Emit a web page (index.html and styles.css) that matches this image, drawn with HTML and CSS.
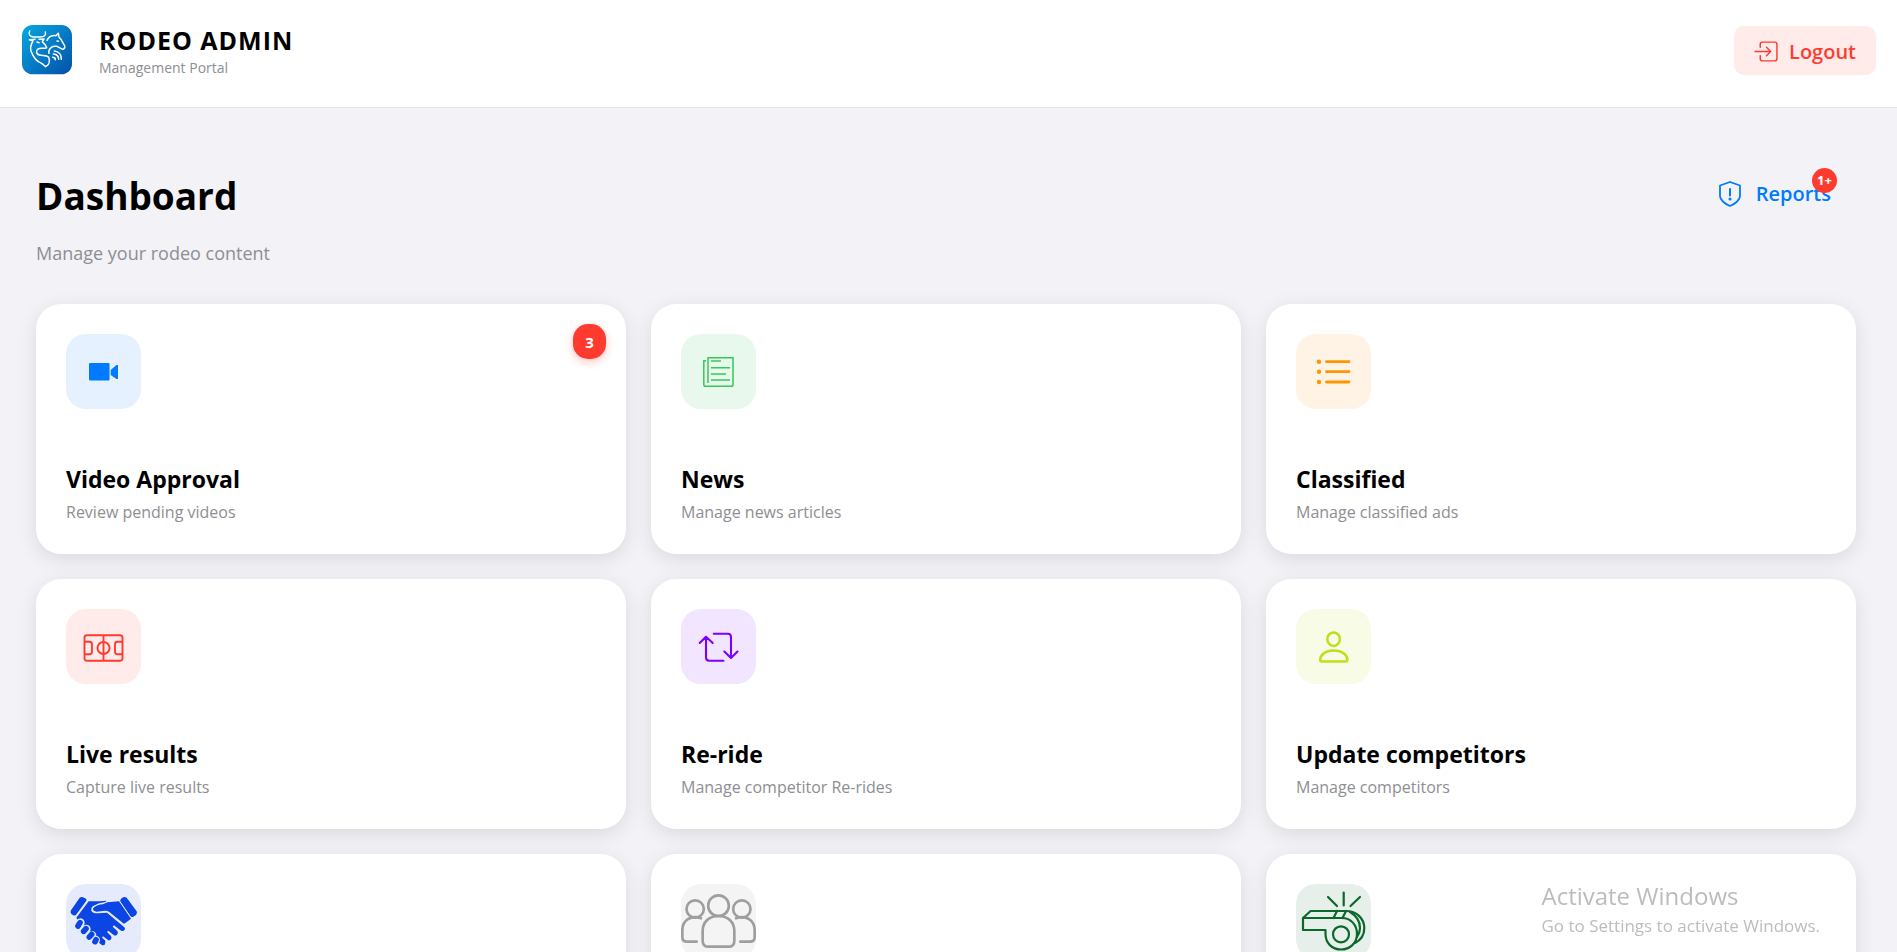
FILE: index.html
```html
<!DOCTYPE html>
<html lang="en">
<head>
<meta charset="utf-8">
<title>Rodeo Admin</title>
<meta name="viewport" content="width=device-width, initial-scale=1">
<link rel="stylesheet" href="styles.css">
</head>
<body>
<div class="app">
  <header class="topbar">
    <div class="brand">
      <svg class="brand-logo" viewBox="66 75 150 150" fill="none" stroke="#fff" stroke-width="4.5" stroke-linecap="round" stroke-linejoin="round" aria-hidden="true">
        <defs>
          <linearGradient id="logo-bg" x1="0" y1="0" x2="1" y2="1">
            <stop offset="0" stop-color="#06a8e2"/>
            <stop offset="1" stop-color="#0450a8"/>
          </linearGradient>
        </defs>
        <rect x="66" y="75" width="150" height="148" rx="32" fill="url(#logo-bg)" stroke="none"/>
        <path d="M89 93C84 103 90 110 100 111H120C133 111 139 106 136 96"/>
        <path d="M105 118L88 119L99 122C94 132 89 141 93 153C99 170 108 184 125 190L137 200C150 194 149 180 146 172C139 163 128 168 118 165C108 162 107 152 114 147C122 142 133 148 140 143L136 135L127 125L132 117L117 118"/>
        <path d="M111 126L117 128"/>
        <path d="M141 121C146 110 158 106 168 107L175 100L177 111C184 118 188 128 194 137C196 145 190 150 184 146L171 139C164 138 158 139 154 142C148 147 145 153 147 160"/>
        <path d="M171 123L175 124"/>
        <path d="M158 172C163 172 166 175 166 179M160 162C170 163 176 170 176 178M163 153C177 155 185 165 184 178"/>
      </svg>
      <div class="brand-text">
        <div class="brand-name">RODEO ADMIN</div>
        <div class="brand-sub">Management Portal</div>
      </div>
    </div>
    <button class="logout" type="button">
      <svg class="logout-icon" viewBox="0 0 24 24" fill="none" stroke="currentColor" stroke-width="1.4" stroke-linecap="round" stroke-linejoin="round" aria-hidden="true">
        <path d="M6 8V5A2 2 0 0 1 8 3H20A2 2 0 0 1 22 5V19A2 2 0 0 1 20 21H8A2 2 0 0 1 6 19V16M1 12H15M12 8L16 12L12 16"/>
      </svg>
      Logout
    </button>
  </header>

  <main class="content">
    <div class="page-head">
      <div>
        <h1 class="page-title">Dashboard</h1>
        <p class="page-sub">Manage your rodeo content</p>
      </div>
      <a class="reports" href="#">
        <svg class="reports-icon" viewBox="0 0 24 28" fill="none" stroke="currentColor" stroke-width="1.8" stroke-linecap="round" stroke-linejoin="round" aria-hidden="true">
          <path d="M12 2L22 5.500V16C22 20 17 24 12 26C7 24 2 20 2 16V5.500Z"/>
          <path d="M12 9V15.500" stroke-width="2"/><circle cx="12" cy="19" r="1.500" fill="currentColor" stroke="none"/>
        </svg>
        Reports
        <span class="reports-count">1+</span>
      </a>
    </div>

    <div class="cards">
      <a class="card" href="#">
        <span class="count">3</span>
        <svg class="tile blue" viewBox="0 0 75 75" fill="currentColor" aria-hidden="true">
          <rect x="23" y="29" width="20.500" height="17.500" rx="1"/>
          <path d="M44.700 36L50.500 31H52V45H50.500L44.700 41Z"/>
        </svg>
        <h2 class="card-title">Video Approval</h2>
        <p class="card-text">Review pending videos</p>
      </a>
      <a class="card" href="#">
        <svg class="tile green" viewBox="0 0 75 75" fill="none" stroke="currentColor" stroke-width="1.500" aria-hidden="true">
          <path d="M27 49V23.700H52V50.500Q52 52.300 50.300 52.300H24.500Q22.800 52.300 22.800 50.500V26.800H25M30 27H40M30 33.800H49M30 40H45M30 46H49"/>
        </svg>
        <h2 class="card-title">News</h2>
        <p class="card-text">Manage news articles</p>
      </a>
      <a class="card" href="#">
        <svg class="tile orange" viewBox="0 0 75 75" fill="none" stroke="currentColor" stroke-width="2.800" stroke-linecap="round" aria-hidden="true">
          <path d="M30.500 27.700H53M30.500 37.700H53M30.500 48H53"/>
          <g fill="currentColor" stroke="none"><circle cx="23" cy="27.700" r="2.200"/><circle cx="23" cy="37.700" r="2.200"/><circle cx="23" cy="48" r="2.200"/></g>
        </svg>
        <h2 class="card-title">Classified</h2>
        <p class="card-text">Manage classified ads</p>
      </a>
      <a class="card" href="#">
        <svg class="tile red" viewBox="0 0 75 75" fill="none" stroke="currentColor" stroke-width="1.900" aria-hidden="true">
          <rect x="18.500" y="26.300" width="38" height="25.500" rx="2.500"/>
          <path d="M37.500 26V52M18.500 32.800H23.500Q26 32.800 26 35.300V42.800Q26 45.300 23.500 45.300H18.500M56.500 32.800H51.500Q49 32.800 49 35.300V42.800Q49 45.300 51.500 45.300H56.500"/>
          <circle cx="37.500" cy="39" r="6"/>
        </svg>
        <h2 class="card-title">Live results</h2>
        <p class="card-text">Capture live results</p>
      </a>
      <a class="card" href="#">
        <svg class="tile purple" viewBox="0 0 75 75" fill="none" stroke="currentColor" stroke-width="2.100" stroke-linecap="round" stroke-linejoin="round" aria-hidden="true">
          <path d="M18.700 34L25 27.700L31.700 34M25 28V48.500Q25 51.700 28.200 51.700H42.500M32.800 24.700H46.800Q50 24.700 50 27.900V49M43.300 42.500L50 49L56.500 42.500"/>
        </svg>
        <h2 class="card-title">Re-ride</h2>
        <p class="card-text">Manage competitor Re-rides</p>
      </a>
      <a class="card" href="#">
        <svg class="tile lime" viewBox="0 0 75 75" fill="none" stroke="currentColor" stroke-width="2.500" stroke-linejoin="round" aria-hidden="true">
          <ellipse cx="37.600" cy="30.200" rx="6.300" ry="6.700"/>
          <path d="M37.700 41.500C29 41.500 24.200 46.500 24.200 50.700Q24.200 52.500 26 52.500H49.500Q51.400 52.500 51.400 50.700C51.400 46.500 46.500 41.500 37.700 41.500Z"/>
        </svg>
        <h2 class="card-title">Update competitors</h2>
        <p class="card-text">Manage competitors</p>
      </a>
      <a class="card" href="#">
        <svg class="tile royal" viewBox="108 132 225 225" fill="currentColor" aria-hidden="true">
          <path d="M149 173Q156 169 162 173L168 176Q172 180 168 184L140 222Q136 228 130 226L124 222Q119 218 123 211Z"/>
          <path d="M276 174Q283 169 290 173L320 214Q323 221 318 225L310 230Q304 233 300 227L272 186Q268 180 276 174Z"/>
          <path d="M176 184H211L229 182L227 186L207 190L188 199Q181 205 184 212Q189 221 204 220L231 218L283 262Q288 268 281 272Q276 275 271 271L252 256L248 260L262 273Q266 279 261 284Q256 289 250 284L235 272L231 276L243 288Q247 294 242 299Q236 304 231 298L219 289L216 293L225 301Q229 308 224 314Q217 318 212 312L190 298L142 238L139 233Z"/>
          <path d="M189 205Q202 193 219 193L232 187L267 184L303 236L285 250Q280 252 276 247L237 215Q231 211 218 213L200 215Q189 215 189 205Z" stroke="#e6ebfc" stroke-width="5" paint-order="stroke"/>
          <g stroke="#e6ebfc" stroke-width="26" stroke-linecap="round">
            <path d="M151 248L144 258M169 267L161 275M186 286L177 292M197 300L194 305"/>
          </g>
          <g stroke="currentColor" stroke-width="17" stroke-linecap="round">
            <path d="M150 248L144 258M168 266L161 274M185 283L178 291M198 299L195 305"/>
          </g>
        </svg>
      </a>
      <a class="card" href="#">
        <svg class="tile gray" viewBox="123 132 225 225" fill="none" stroke="currentColor" stroke-width="8" stroke-linecap="round" stroke-linejoin="round" aria-hidden="true">
          <circle cx="235.500" cy="197" r="31"/><circle cx="165.500" cy="207" r="26"/><circle cx="305.500" cy="207" r="26"/>
          <path d="M235.500 228C206 228 188 247 188 272V302Q188 320 206 320H265Q283 320 283 302V272C283 247 265 228 235.500 228Z"/>
          <path d="M183 235C153 223 127 242 127 270V291Q127 305 141 305H170M288 235C318 223 344 242 344 270V291Q344 305 330 305H301"/>
        </svg>
      </a>
      <a class="card" href="#">
        <svg class="tile forest" viewBox="0 0 75 75" fill="none" stroke="currentColor" stroke-width="2.200" stroke-linecap="round" stroke-linejoin="round" aria-hidden="true">
          <path d="M32 13L41 22M47.700 8.500V21.500M64 13L54.500 22"/>
          <path d="M7 34L14.600 27H50C61 27 68.300 35 68.300 44C68.300 51 65 56 59 59"/>
          <path d="M7 34H46C55 34 61 41 61 50C61 59 54 65.500 45 65.500C36 65.500 29.500 59 29.500 50V46H7Z"/>
          <path d="M41 27L37.500 34M50 27L46.500 34M54 28C61 32 64 38 64 44C64 48 63 50 61 53"/>
          <circle cx="45" cy="50.300" r="8"/>
        </svg>
      </a>
    </div>
  </main>

  <aside class="activation">
    <div class="activation-title">Activate Windows</div>
    <div class="activation-text">Go to Settings to activate Windows.</div>
  </aside>
</div>
</body>
</html>
```
FILE: styles.css
```css
* {
  box-sizing: border-box;
}

body {
  margin: 0;
  background: #f2f2f7;
  color: #000;
  font-family: "Segoe UI", "Open Sans", "Noto Sans", sans-serif;
}

.app {
  height: 100vh;
  overflow: hidden;
}

.topbar {
  display: flex;
  align-items: flex-start;
  justify-content: space-between;
  padding: 25px 21px 27px 22px;
  background: #fff;
  border-bottom: 1px solid #e4e4e9;
}

.brand {
  display: flex;
  gap: 27px;
}

.brand-logo {
  width: 50px;
  height: 50px;
}

.brand-name {
  font-size: 25px;
  font-weight: 700;
  line-height: 31px;
  letter-spacing: 1px;
}

.brand-sub {
  font-size: 14px;
  line-height: 24px;
  color: #8e8e93;
}

.logout {
  display: flex;
  align-items: center;
  gap: 10px;
  height: 49px;
  margin-top: 1px;
  padding: 1px 20px 0;
  border: 0;
  border-radius: 10px;
  background: #ffebea;
  color: #ff3b30;
  font: inherit;
  font-size: 20px;
  font-weight: 600;
  cursor: pointer;
}

.logout-icon {
  width: 25px;
  height: 25px;
}

.content {
  padding: 60px 41px 40px 36px;
}

.page-head {
  display: flex;
  align-items: flex-start;
  justify-content: space-between;
  margin-bottom: 37px;
}

.page-title {
  margin: 0;
  font-size: 37px;
  font-weight: 700;
  line-height: 56px;
}

.page-sub {
  margin: 15px 0 0;
  font-size: 18px;
  line-height: 28px;
  color: #8e8e93;
}

.reports {
  position: relative;
  display: flex;
  align-items: center;
  gap: 14px;
  margin: 11px 25px 0 0;
  color: #007aff;
  font-size: 20px;
  font-weight: 600;
  line-height: 30px;
  text-decoration: none;
}

.reports-icon {
  width: 24px;
  height: 28px;
}

.reports-count {
  position: absolute;
  top: -11px;
  right: -6px;
  width: 25px;
  height: 25px;
  border-radius: 50%;
  background: #ff3b30;
  color: #fff;
  font-size: 13px;
  font-weight: 700;
  line-height: 25px;
  text-align: center;
}

.cards {
  display: grid;
  grid-template-columns: repeat(3, 1fr);
  gap: 25px;
}

.card {
  position: relative;
  display: block;
  min-height: 250px;
  padding: 30px;
  border-radius: 25px;
  background: #fff;
  box-shadow: 0 5px 20px rgba(0, 0, 0, 0.1);
  color: #000;
  text-decoration: none;
}

.card-title {
  margin: 53px 0 0;
  font-size: 23px;
  font-weight: 700;
  line-height: 34px;
}

.card-text {
  margin: 4px 0 0;
  font-size: 16px;
  line-height: 24px;
  color: #8e8e93;
}

.count {
  position: absolute;
  top: 20px;
  right: 20px;
  width: 33px;
  height: 35px;
  border-radius: 15px;
  background: #ff3b30;
  box-shadow: 0 3px 8px rgba(255, 59, 48, 0.3);
  color: #fff;
  font-size: 15px;
  font-weight: 700;
  line-height: 36px;
  text-align: center;
}

.tile {
  display: block;
  width: 75px;
  height: 75px;
  border-radius: 20px;
}

.blue { background: #e5f1ff; color: #007aff; }
.green { background: #e8f8ec; color: #34c759; }
.orange { background: #fff3e5; color: #ff9500; }
.red { background: #ffebea; color: #ff3b30; }
.purple { background: #f1e5ff; color: #7b00ff; }
.lime { background: #f8fbe6; color: #bde01a; }
.royal { background: #e6ebfc; color: #0b45e3; }
.gray { background: #f4f4f4; color: #9e9e9e; }
.forest { background: #e6efea; color: #0a682b; }

.activation {
  position: fixed;
  right: 77px;
  bottom: 12px;
  color: #bcbcbc;
}

.activation-title {
  font-size: 24px;
  line-height: 32px;
}

.activation-text {
  font-size: 17px;
  line-height: 28px;
}
```
